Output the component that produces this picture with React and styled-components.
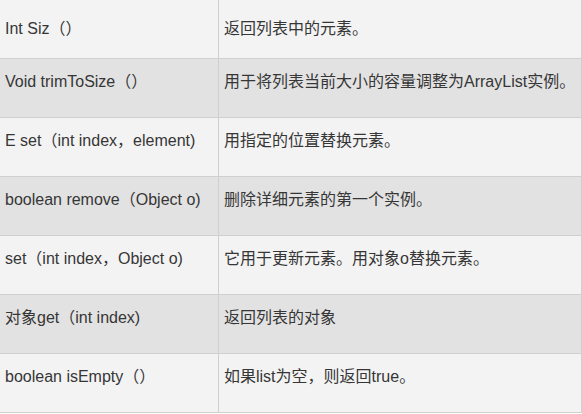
import React from "react";
import styled, { createGlobalStyle } from "styled-components";

const Global = createGlobalStyle`
  html, body { margin: 0; padding: 0; background: #ffffff; }
  body { font-family: "Liberation Sans", Arial, "Noto Sans CJK SC", sans-serif; }
`;

const Table = styled.div`
  width: 582px;
  display: flex;
  flex-direction: column;
`;

const Row = styled.div`
  display: grid;
  grid-template-columns: 219px 1fr;
  height: 58px;
  border-bottom: 1px solid #cfcfcf;
  border-right: 1px solid #cfcfcf;
  background: ${(p) => (p.$shade ? "#e2e2e2" : "#f3f3f3")};
`;

const Cell = styled.div`
  padding: ${(p) => (p.$first ? "17px" : "11px")} 5px 0 5px;
  font-family: "Liberation Sans", Arial, "Noto Sans CJK SC", sans-serif;
  font-size: 16px;
  line-height: 24px;
  color: #363636;
  white-space: nowrap;
  border-right: ${(p) => (p.$left ? "1px solid #cfcfcf" : "none")};
`;

const rows = [
  ["Int Siz（）", "返回列表中的元素。"],
  ["Void trimToSize（）", "用于将列表当前大小的容量调整为ArrayList实例。"],
  ["E set（int index，element)", "用指定的位置替换元素。"],
  ["boolean remove（Object o)", "删除详细元素的第一个实例。"],
  ["set（int index，Object o)", "它用于更新元素。用对象o替换元素。"],
  ["对象get（int index)", "返回列表的对象"],
  ["boolean isEmpty（）", "如果list为空，则返回true。"],
];

export default function App() {
  return (
    <>
      <Global />
      <Table>
        {rows.map(([a, b], i) => (
          <Row key={i} $shade={i % 2 === 1}>
            <Cell $left $first={i === 0}>{a}</Cell>
            <Cell $first={i === 0}>{b}</Cell>
          </Row>
        ))}
      </Table>
    </>
  );
}
